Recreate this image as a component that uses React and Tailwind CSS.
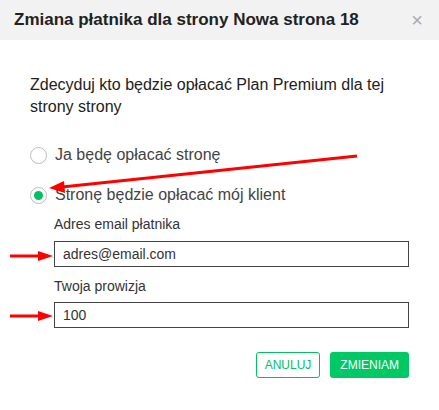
export default function App() {
  return (
    <div className="relative w-[439px] h-[410px] bg-white text-[#222] overflow-hidden" style={{ fontFamily: '"Liberation Sans", Arial, sans-serif' }}>
      <div className="h-[40px] bg-[#f2f2f2] flex items-center justify-between pl-[14px] pr-[16px]">
        <h1 className="text-[17px] font-bold text-[#222]">Zmiana płatnika dla strony Nowa strona 18</h1>
        <span className="text-[20px] leading-none text-[#aaa]">×</span>
      </div>

      <div className="pl-[30px] pr-[30px] pt-[34px]">
        <p className="text-[16px] leading-[22px] text-[#222]">
          Zdecyduj kto będzie opłacać Plan Premium dla tej strony strony
        </p>

        <div className="mt-[27px] flex flex-col gap-[20px]">
          <label className="flex items-center gap-[8px] h-[20px] text-[16px] text-[#444]">
            <span className="w-[17px] h-[17px] rounded-full border border-[#bbb] bg-white" />
            Ja będę opłacać stronę
          </label>
          <label className="flex items-center gap-[8px] h-[20px] text-[16px] text-[#444]">
            <span className="w-[17px] h-[17px] rounded-full border border-[#bbb] bg-white flex items-center justify-center">
              <span className="w-[9px] h-[9px] rounded-full bg-[#00c060]" />
            </span>
            Stronę będzie opłacać mój klient
          </label>
        </div>

        <div className="pl-[24px] mt-[9px]">
          <p className="h-[20px] leading-[20px] text-[14px] text-[#333]">Adres email płatnika</p>
          <div className="mt-[7px] h-[26px] w-[355px] border border-[#444] flex items-center px-[8px] text-[14px] text-[#333]">
            adres@email.com
          </div>
          <p className="mt-[9px] h-[20px] leading-[20px] text-[14px] text-[#333]">Twoja prowizja</p>
          <div className="mt-[6px] h-[26px] w-[355px] border border-[#444] flex items-center px-[8px] text-[14px] text-[#333]">
            100
          </div>
        </div>

        <div className="mt-[24px] flex justify-end gap-[10px]">
          <button className="h-[26px] px-[8px] rounded-[3px] border border-[#00c060] text-[#00c060] text-[12px] bg-white">
            ANULUJ
          </button>
          <button className="h-[26px] px-[10px] rounded-[3px] bg-[#00c864] text-white text-[12px]">
            ZMIENIAM
          </button>
        </div>
      </div>

      <svg className="absolute left-0 top-0 pointer-events-none" width="439" height="410">
        <line x1="357" y1="156" x2="62" y2="187" stroke="#f00" strokeWidth="3" />
        <polygon points="49,188 64,181 65,193" fill="#f00" />
        <line x1="10" y1="256" x2="40" y2="256" stroke="#f00" strokeWidth="3" />
        <polygon points="53,256 38,251 38,261" fill="#f00" />
        <line x1="10" y1="316" x2="40" y2="316" stroke="#f00" strokeWidth="3" />
        <polygon points="53,316 38,311 38,321" fill="#f00" />
      </svg>
    </div>
  );
}
